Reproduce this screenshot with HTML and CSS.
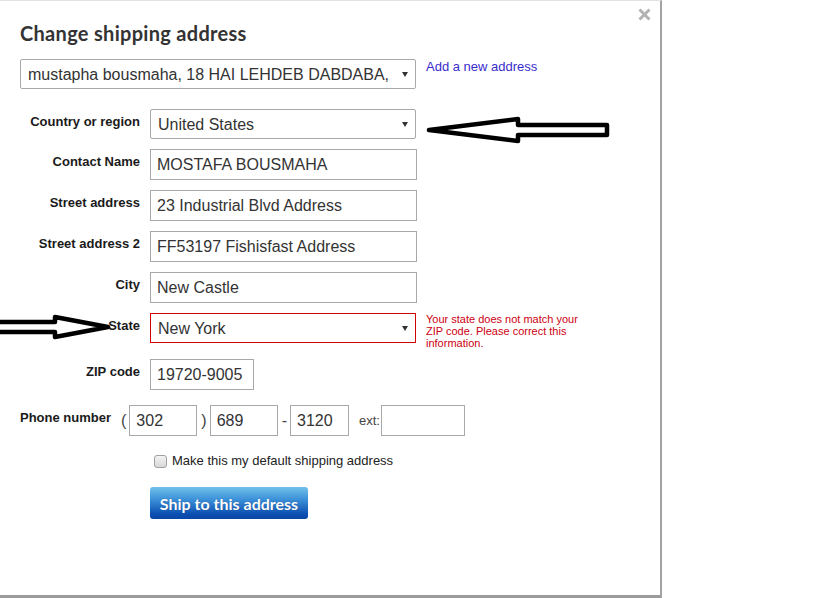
FILE: index.html
```html
<!DOCTYPE html>
<html lang="en">
<head>
<meta charset="utf-8">
<title>Change shipping address</title>
<link rel="stylesheet" href="styles.css">
</head>
<body>
<div class="dialog">
  <button class="close" type="button" aria-label="Close">
    <svg width="13" height="13" viewBox="0 0 13 13"><path d="M1.5 1.5 L11.5 11.5 M11.5 1.5 L1.5 11.5" stroke="#b3b3b3" stroke-width="3" fill="none"/></svg>
  </button>
  <h1 class="title">Change shipping address</h1>

  <div class="address-row">
    <div class="select select-address">
      <select><option>mustapha bousmaha, 18 HAI LEHDEB DABDABA, ...</option></select>
    </div>
    <a class="add-link" href="#">Add a new address</a>
  </div>

  <form class="form">
    <div class="row">
      <label class="lbl">Country or region</label>
      <div class="select select-field"><select><option>United States</option></select></div>
    </div>
    <div class="row">
      <label class="lbl">Contact Name</label>
      <input class="field" type="text" value="MOSTAFA BOUSMAHA">
    </div>
    <div class="row">
      <label class="lbl">Street address</label>
      <input class="field" type="text" value="23 Industrial Blvd Address">
    </div>
    <div class="row">
      <label class="lbl">Street address 2</label>
      <input class="field" type="text" value="FF53197 Fishisfast Address">
    </div>
    <div class="row">
      <label class="lbl">City</label>
      <input class="field" type="text" value="New Castle">
    </div>
    <div class="row row-state">
      <label class="lbl">State</label>
      <div class="select select-field select-error"><select><option>New York</option></select></div>
      <p class="error">Your state does not match your ZIP code. Please correct this information.</p>
    </div>
    <div class="row row-zip">
      <label class="lbl">ZIP code</label>
      <input class="field field-zip" type="text" value="19720-9005">
    </div>
    <div class="row row-phone">
      <label class="lbl lbl-phone">Phone number</label>
      <div class="phone">
        <span class="sep sep-open">(</span>
        <input class="field field-p1" type="text" value="302">
        <span class="sep sep-close">)</span>
        <input class="field field-p1" type="text" value="689">
        <span class="sep sep-dash">-</span>
        <input class="field field-p3" type="text" value="3120">
        <span class="ext">ext:</span>
        <input class="field field-ext" type="text" value="">
      </div>
    </div>
    <label class="default-row">
      <input type="checkbox" class="check">
      <span>Make this my default shipping address</span>
    </label>
    <button type="button" class="ship-btn">Ship to this address</button>
  </form>
</div>

<svg class="annot" width="819" height="598" viewBox="0 0 819 598" aria-hidden="true">
  <polygon points="429,130 518,119 518,125 607,125 607,135 518,135 518,141" fill="#fff" stroke="#000" stroke-width="4.5" stroke-linejoin="round"/>
  <polygon points="-6,322 55,322 55,317 108,327 55,337 55,332 -6,332" fill="#fff" stroke="#000" stroke-width="4.5" stroke-linejoin="round"/>
</svg>
</body>
</html>
```
FILE: styles.css
```css
html, body {
  margin: 0;
  padding: 0;
  background: #fff;
}

body {
  font-family: "Liberation Sans", Arial, sans-serif;
  color: #333;
  position: relative;
  width: 819px;
  height: 598px;
  overflow: hidden;
}

.dialog {
  box-sizing: border-box;
  width: 662px;
  height: 598px;
  border-top: 1px solid #e2e2e2;
  border-right: 2px solid #a3a3a3;
  border-bottom: 3px solid #9c9c9c;
  background: #fff;
  padding: 0 20px;
  position: relative;
}

.close {
  position: absolute;
  top: 7px;
  right: 9px;
  width: 13px;
  height: 13px;
  padding: 0;
  border: 0;
  background: none;
  line-height: 0;
}

.title {
  margin: 0;
  padding-top: 19px;
  font-family: Lato, "Open Sans", sans-serif;
  font-weight: 700;
  font-size: 20px;
  letter-spacing: 0.3px;
  line-height: 26px;
  color: #333;
}

.address-row {
  margin-top: 13px;
  display: flex;
  align-items: flex-start;
  gap: 10px;
}

.select {
  position: relative;
}

.select::after {
  content: "";
  position: absolute;
  right: 8px;
  top: 13px;
  border-left: 3px solid transparent;
  border-right: 3px solid transparent;
  border-top: 5px solid #333;
}

.select select {
  appearance: none;
  -webkit-appearance: none;
  box-sizing: border-box;
  width: 100%;
  height: 30px;
  border: 1px solid #a9a9a9;
  border-radius: 2px;
  background: #fff;
  padding: 0 24px 0 7px;
  font-family: "Liberation Sans", Arial, sans-serif;
  font-size: 16px;
  color: #333;
  overflow: hidden;
  white-space: nowrap;
  text-overflow: clip;
}

.select-address {
  width: 396px;
}

.select-field {
  width: 266px;
}

.select-error select {
  border-color: #d00000;
  border-radius: 0;
}

.add-link {
  font-size: 13px;
  line-height: 15px;
  color: #3a2ccc;
  text-decoration: none;
}

.form {
  margin: 20px 0 0;
}

.row {
  display: flex;
  align-items: flex-start;
  margin-bottom: 10px;
}

.lbl {
  width: 120px;
  margin-right: 10px;
  flex: none;
  text-align: right;
  font-weight: 700;
  font-size: 13px;
  line-height: 15px;
  padding-top: 5px;
  color: #1a1a1a;
}

.field {
  box-sizing: border-box;
  height: 31px;
  width: 267px;
  border: 1px solid #a9a9a9;
  border-radius: 0;
  padding: 0 6px;
  margin: 0;
  font-family: "Liberation Sans", Arial, sans-serif;
  font-size: 16px;
  color: #333;
  background: #fff;
  outline: none;
}

.row-state {
  height: 36px;
}

.error {
  margin: 0 0 0 10px;
  width: 165px;
  font-size: 11px;
  line-height: 12px;
  color: #cc0010;
}

.row-zip {
  margin-bottom: 15px;
}

.field-zip {
  width: 104px;
}

.lbl-phone {
  width: auto;
  text-align: left;
}

.phone {
  display: flex;
  align-items: center;
}

.sep {
  font-size: 16px;
  color: #444;
}

.sep-open {
  margin: 0 3px 0 0;
}

.sep-close {
  margin: 0 3px 0 4px;
}

.sep-dash {
  margin: 0 3px 0 4px;
}

.field-p1 {
  width: 68px;
}

.field-p3 {
  width: 59px;
}

.ext {
  font-size: 13px;
  color: #444;
  margin: 0 1px 0 10px;
}

.field-ext {
  width: 84px;
}

.default-row {
  display: flex;
  align-items: center;
  margin: 17px 0 0 130px;
  font-size: 13px;
  line-height: 16px;
  color: #222;
}

.check {
  appearance: none;
  -webkit-appearance: none;
  box-sizing: border-box;
  width: 13px;
  height: 13px;
  margin: 0 5px 0 4px;
  border: 1px solid #a0a0a0;
  border-radius: 3px;
  background: linear-gradient(to bottom, #f4f4f4, #d8d8d8);
}

.ship-btn {
  display: block;
  margin: 18px 0 0 130px;
  width: 158px;
  height: 32px;
  border: 0;
  border-radius: 3px;
  background: linear-gradient(to bottom, #72c1ea 0%, #3a8fd8 40%, #0c4fb0 85%, #0a46a6 100%);
  color: #fff;
  font-family: Lato, "Open Sans", sans-serif;
  font-weight: 700;
  font-size: 16px;
  padding: 0;
  text-shadow: 0 0 1px rgba(0, 0, 60, 0.4);
}

.annot {
  position: absolute;
  top: 0;
  left: 0;
  pointer-events: none;
}
```
